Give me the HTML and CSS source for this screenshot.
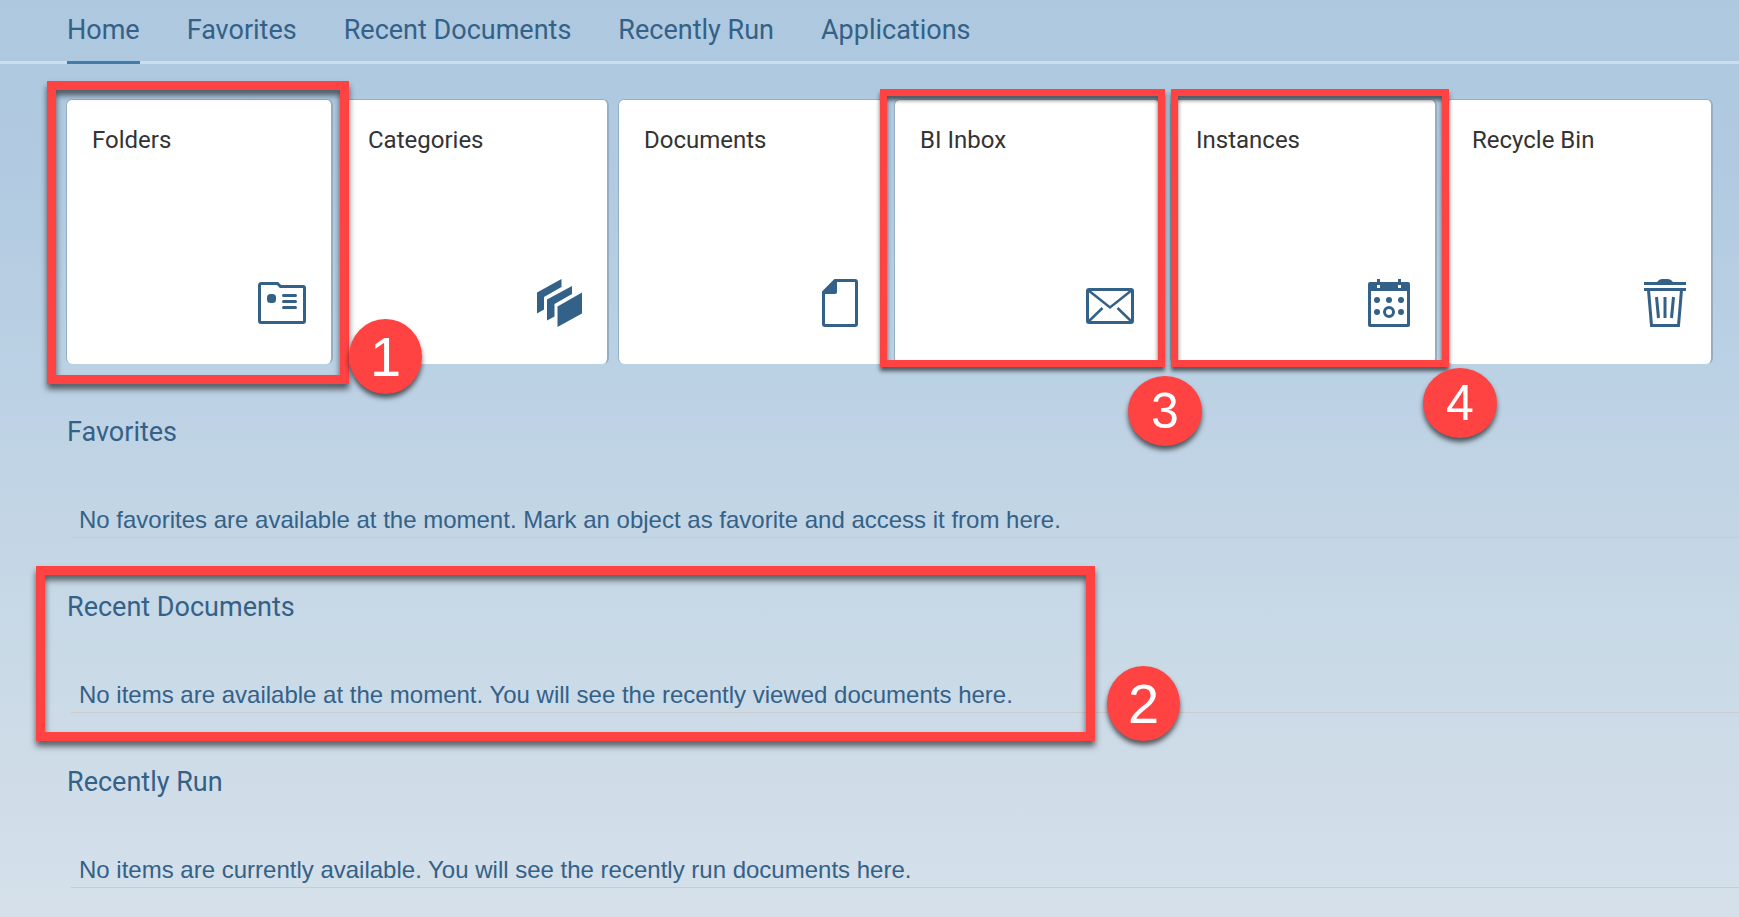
FILE: index.html
```
<!DOCTYPE html>
<html lang="en">
<head>
    <meta charset="UTF-8">
    <meta name="viewport" content="width=device-width, initial-scale=1.0">
    <title>Home</title>
    <link rel="stylesheet" href="styles.css">
</head>
<body>

<nav class="tabs">
    <a class="tab active" href="#home">Home</a>
    <a class="tab" href="#favorites">Favorites</a>
    <a class="tab" href="#recent-documents">Recent Documents</a>
    <a class="tab" href="#recently-run">Recently Run</a>
    <a class="tab" href="#applications">Applications</a>
</nav>

<main id="home">
    <!-- Tiles -->
    <div class="tiles">
        <div class="tile-cell">
            <a class="tile" href="#folders">
                <span class="tile-title">Folders</span>
                <svg class="tile-icon" viewBox="0 0 48 48">
                    <path class="line" d="M3 4.500H19.500L22.500 7.500H45A1.500 1.500 0 0 1 46.500 9V42A1.500 1.500 0 0 1 45 43.500H3A1.500 1.500 0 0 1 1.500 42V6A1.500 1.500 0 0 1 3 4.500Z"/>
                    <rect x="9" y="15" width="9" height="9" rx="3.500"/>
                    <path class="line round" d="M25.500 16.500H37.500M25.500 22.500H37.500M25.500 28.500H37.500"/>
                </svg>
            </a>
            <div class="frame frame-folders"></div>
            <span class="badge badge-1">1</span>
        </div>
        <div class="tile-cell">
            <a class="tile" href="#categories">
                <span class="tile-title">Categories</span>
                <svg class="tile-icon" viewBox="0 0 48 48">
                    <path d="M3 13.500L27.500 0V8L10 18V30.500L3 34.500Z"/>
                    <path d="M13 20.500L38 7V15L20.500 25V37.500L13 41.500Z"/>
                    <path d="M23.500 27.500L48 13.500V34.500L23.500 48Z"/>
                </svg>
            </a>
        </div>
        <div class="tile-cell">
            <a class="tile" href="#documents">
                <span class="tile-title">Documents</span>
                <svg class="tile-icon" viewBox="0 0 48 48">
                    <path class="line" d="M25 1.500H45A1.500 1.500 0 0 1 46.500 3V45A1.500 1.500 0 0 1 45 46.500H15A1.500 1.500 0 0 1 13.500 45V13Z"/>
                    <path d="M25 1.500H27V13Q27 15 25 15H13.500V13Z"/>
                </svg>
            </a>
        </div>
        <div class="tile-cell">
            <a class="tile" href="#inbox">
                <span class="tile-title">BI Inbox</span>
                <svg class="tile-icon" viewBox="0 0 48 48">
                    <rect class="line" x="1.500" y="10.500" width="45" height="33" rx="1.500"/>
                    <path class="line thin" d="M2 11L24 28.500L46 11M2 43L16.500 29M46 43L31.500 29"/>
                </svg>
            </a>
            <div class="frame thin-frame frame-inbox"></div>
            <span class="badge badge-wide badge-3">3</span>
        </div>
        <div class="tile-cell">
            <a class="tile" href="#instances">
                <span class="tile-title">Instances</span>
                <svg class="tile-icon" viewBox="0 0 48 48">
                    <path fill-rule="evenodd" d="M8 3H15V0H18V3H36V0H39V3H46A2 2 0 0 1 48 5V46A2 2 0 0 1 46 48H8A2 2 0 0 1 6 46V5A2 2 0 0 1 8 3ZM9 12V45H45V12ZM15 6V9H18V6ZM36 6V9H39V6Z"/>
                    <circle cx="15" cy="21" r="3"/>
                    <circle cx="27" cy="21" r="3"/>
                    <circle cx="39" cy="21" r="3"/>
                    <circle cx="15" cy="33" r="3"/>
                    <circle cx="39" cy="33" r="3"/>
                    <circle class="line" cx="27" cy="33" r="4.500"/>
                </svg>
            </a>
            <div class="frame thin-frame frame-instances"></div>
            <span class="badge badge-wide badge-4">4</span>
        </div>
        <div class="tile-cell">
            <a class="tile" href="#recycle-bin">
                <span class="tile-title">Recycle Bin</span>
                <svg class="tile-icon" viewBox="0 0 48 48">
                    <path d="M6 3H19Q21 0 24 0H30Q33 0 35 3H48V6H6ZM6 9H48V12H6Z"/>
                    <path class="line" d="M10.500 11L13.500 46.500H40.500L43.500 11"/>
                    <path class="line" d="M18.500 18L20.500 39M27 18V39M35.500 18L33.500 39"/>
                </svg>
            </a>
        </div>
    </div>

    <!-- Sections -->
    <section class="section" id="favorites">
        <h2>Favorites</h2>
        <p>No favorites are available at the moment. Mark an object as favorite and access it from here.</p>
    </section>
    <section class="section" id="recent-documents">
        <h2>Recent Documents</h2>
        <p>No items are available at the moment. You will see the recently viewed documents here.</p>
        <div class="frame frame-recent"></div>
        <span class="badge badge-2">2</span>
    </section>
    <section class="section" id="recently-run">
        <h2>Recently Run</h2>
        <p>No items are currently available. You will see the recently run documents here.</p>
    </section>
</main>

</body>
</html>
```
FILE: styles.css
```
* {
    box-sizing: border-box;
}
body {
    margin: 0;
    min-height: 100vh;
    overflow-x: hidden;
    font-family: Roboto, "Liberation Sans", sans-serif;
    color: #346187;
    background: linear-gradient(#adc8df, #b1cae1 18%, #bbd1e4 40%, #c7d8e6 66%, #d5e0ea);
}
.tabs {
    display: flex;
    gap: 47px;
    height: 64px;
    padding-left: 67px;
    border-bottom: 3px solid #cddded;
}
.tab {
    height: 64px;
    line-height: 60px;
    font-size: 27px;
    color: #346187;
    text-decoration: none;
    white-space: nowrap;
}
.tab.active {
    border-bottom: 3px solid #427cac;
}

/* tiles */
.tiles {
    display: grid;
    grid-template-columns: repeat(6, 1fr);
    gap: 11px;
    padding: 35px 27px 0 67px;
}
.tile-cell {
    position: relative;
}
.tile {
    display: flex;
    flex-direction: column;
    justify-content: space-between;
    height: 265px;
    margin: 0 -1px;
    padding: 24px 25px 37px;
    background: #fff;
    border: 1px solid #94afc4;
    border-width: 1px 2px 0 1px;
    border-radius: 6px;
    color: #333;
    text-decoration: none;
}
.tile-title {
    font-size: 24px;
    line-height: 32px;
}
.tile-icon {
    width: 48px;
    height: 48px;
    align-self: flex-end;
    fill: #346187;
}
.line {
    fill: none;
    stroke: #346187;
    stroke-width: 3;
}
.line.thin {
    stroke-width: 2.5;
}
.line.round {
    stroke-linecap: round;
}

/* sections */
.section {
    position: relative;
    height: 175px;
    padding: 52px 0 0 67px;
}
.section h2 {
    margin: 0;
    font-size: 27px;
    font-weight: normal;
    line-height: 32px;
}
.section p {
    margin: 55px 0 0 4px;
    padding-left: 8px;
    font-family: "Liberation Sans", Arial, sans-serif;
    font-size: 24px;
    line-height: 34px;
    border-bottom: 1px solid #cccbcb;
}

/* red callouts */
.frame {
    position: absolute;
    z-index: 1;
    border: 9px solid #ff4343;
    filter: drop-shadow(0 5px 3px rgba(0, 0, 0, 0.6));
    pointer-events: none;
}
.thin-frame {
    border-width: 7px;
    filter: drop-shadow(0 4px 2px rgba(0, 0, 0, 0.6));
}
.frame-folders {
    inset: -18px -17px -20px -20px;
}
.frame-inbox {
    inset: -10px -5px -3px -15px;
}
.frame-instances {
    inset: -10px -13px -3px 0;
}
.frame-recent {
    top: 27px;
    left: 36px;
    width: 1059px;
    height: 175px;
}
.badge {
    position: absolute;
    z-index: 2;
    width: 73px;
    height: 75px;
    border-radius: 50%;
    background: #ff4343;
    box-shadow: 0 4px 5px rgba(0, 0, 0, 0.6);
    color: #fff;
    font-family: "Liberation Sans", Arial, sans-serif;
    font-size: 56px;
    line-height: 75px;
    text-align: center;
}
.badge-wide {
    width: 74px;
    height: 70px;
    font-size: 50px;
    line-height: 70px;
}
.badge-1 {
    right: -90px;
    bottom: -30px;
}
.badge-2 {
    top: 127px;
    left: 1107px;
}
.badge-3 {
    right: -42px;
    bottom: -82px;
}
.badge-4 {
    right: -61px;
    bottom: -74px;
}
```
